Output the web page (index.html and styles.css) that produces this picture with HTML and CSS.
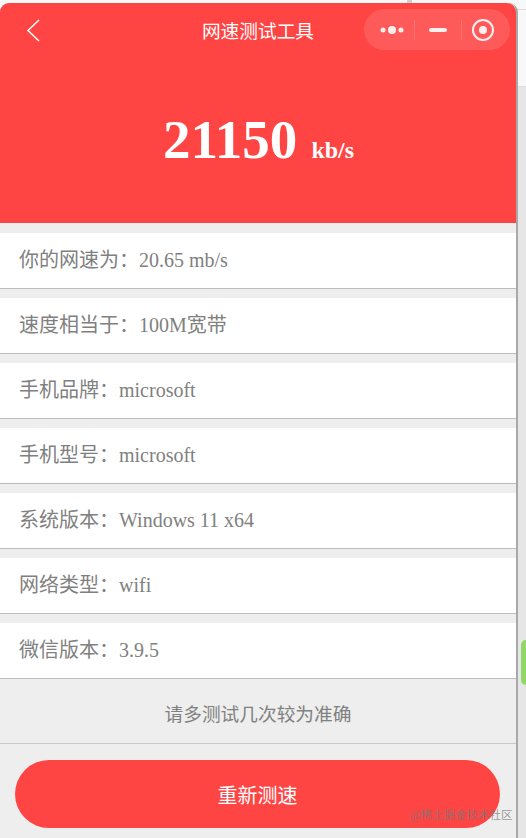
FILE: index.html
```html
<!DOCTYPE html>
<html lang="zh">
<head>
    <meta charset="UTF-8">
    <meta name="viewport" content="width=device-width, initial-scale=1.0">
    <title>网速测试工具</title>
    <link rel="stylesheet" href="styles.css">
</head>
<body>
    <div class="phone">
        <div class="top">
            <div class="nav">
                <svg class="back" width="16" height="24" viewBox="0 0 16 24">
                    <path d="M13 2 L2 12.500 L13 23" fill="none" stroke="#fff" stroke-width="1.500"/>
                </svg>
                <div class="navTitle">网速测试工具</div>
                <div class="capsule">
                    <svg class="dots" width="40" height="14" viewBox="0 0 40 14">
                        <circle cx="9" cy="7" r="2.500" fill="#fff" opacity="0.9"/>
                        <circle cx="18" cy="7" r="4" fill="#fff" opacity="0.9"/>
                        <circle cx="27" cy="7" r="2.500" fill="#fff" opacity="0.9"/>
                    </svg>
                    <span class="capsuleLine"></span>
                    <span class="dash"></span>
                    <span class="capsuleLine"></span>
                    <svg class="ring" width="24" height="24" viewBox="0 0 24 24">
                        <circle cx="12" cy="12" r="10" fill="none" stroke="#fff" stroke-width="2" opacity="0.9"/>
                        <circle cx="12" cy="12" r="4" fill="#fff" opacity="0.9"/>
                    </svg>
                </div>
            </div>
            <div class="speed"><span class="speedNum">21150</span><span class="speedUnit">kb/s</span></div>
        </div>

        <div class="list">
            <div class="row">你的网速为：20.65 mb/s</div>
            <div class="row">速度相当于：100M宽带</div>
            <div class="row">手机品牌：microsoft</div>
            <div class="row">手机型号：microsoft</div>
            <div class="row">系统版本：Windows 11 x64</div>
            <div class="row">网络类型：wifi</div>
            <div class="row">微信版本：3.9.5</div>
        </div>

        <div class="note">请多测试几次较为准确</div>
        <div class="btnWrap">
            <button class="btn">重新测速</button>
        </div>
    </div>

    <div class="notch"></div>
    <div class="sideTab"></div>
    <div class="watermark">@稀土掘金技术社区</div>
</body>
</html>
```

FILE: styles.css
```css
html, body {
    margin: 0;
    height: 100%;
    overflow: hidden;
}
body {
    font-family: "Liberation Serif", "Noto Sans CJK SC", serif;
    background: linear-gradient(#f8f8f8 0 9px, #dcdcdc 9px 10px, #f8f8f8 10px 86px, #dcdcdc 86px 87px, #e6e6e6 87px);
    position: relative;
}
.phone {
    width: 516px;
    height: 835px;
    margin-top: 3px;
    background: #eeeeee;
    border-right: 2px solid #a9a9a9;
    border-radius: 9px 9px 0 0;
}
.top {
    height: 220px;
    background: #ff4444;
    border-radius: 9px 9px 0 0;
    color: #fff;
}
.nav {
    display: grid;
    grid-template-columns: 1fr auto 1fr;
    align-items: center;
    height: 41px;
    padding: 6px 6px 0 6px;
}
.back {
    justify-self: start;
    margin-left: 20px;
}
.navTitle {
    font-size: 18.700px;
}
.capsule {
    justify-self: end;
    display: flex;
    align-items: center;
    width: 146px;
    height: 41px;
    box-sizing: border-box;
    padding-left: 10px;
    border-radius: 21px;
    background: rgba(255, 255, 255, 0.12);
}
.capsuleLine {
    width: 1px;
    height: 20px;
    background: rgba(255, 255, 255, 0.15);
}
.ring {
    margin-left: 9px;
}
.dash {
    width: 18px;
    height: 4px;
    margin: 0 14px;
    border-radius: 2px;
    background: rgba(255, 255, 255, 0.9);
}
.speed {
    text-align: center;
    font-weight: bold;
    line-height: 60px;
    margin-top: 60px;
    padding-left: 1px;
}
.speedNum {
    font-size: 55px;
}
.speedUnit {
    font-size: 24px;
    margin-left: 14px;
}
.list {
    padding-top: 10px;
}
.row {
    height: 55px;
    line-height: 55px;
    margin-bottom: 9px;
    padding-left: 19px;
    font-size: 20px;
    color: #808080;
    background: #fff;
    border-bottom: 1px solid #bdbdbd;
}
.list .row:last-child {
    margin-bottom: 0;
}
.note {
    height: 60px;
    padding-top: 4px;
    line-height: 63px;
    text-align: center;
    font-size: 18.700px;
    color: #808080;
    border-bottom: 1px solid #c8c8c8;
}
.btnWrap {
    padding: 16px 16px 0 15px;
}
.btn {
    display: block;
    width: 100%;
    height: 68px;
    border: 0;
    border-radius: 34px;
    background: #ff4444;
    color: #fff;
    font-family: inherit;
    font-size: 20px;
}
.notch {
    position: absolute;
    left: 407px;
    top: 0;
    width: 5px;
    height: 3px;
    background: #d0d0d0;
}
.sideTab {
    position: absolute;
    right: 0;
    top: 640px;
    width: 5px;
    height: 45px;
    background: #8fd867;
    border-radius: 5px 0 0 5px;
}
.watermark {
    position: absolute;
    left: 410px;
    top: 806px;
    font-size: 11.500px;
    color: rgba(120, 120, 120, 0.75);
}
```
